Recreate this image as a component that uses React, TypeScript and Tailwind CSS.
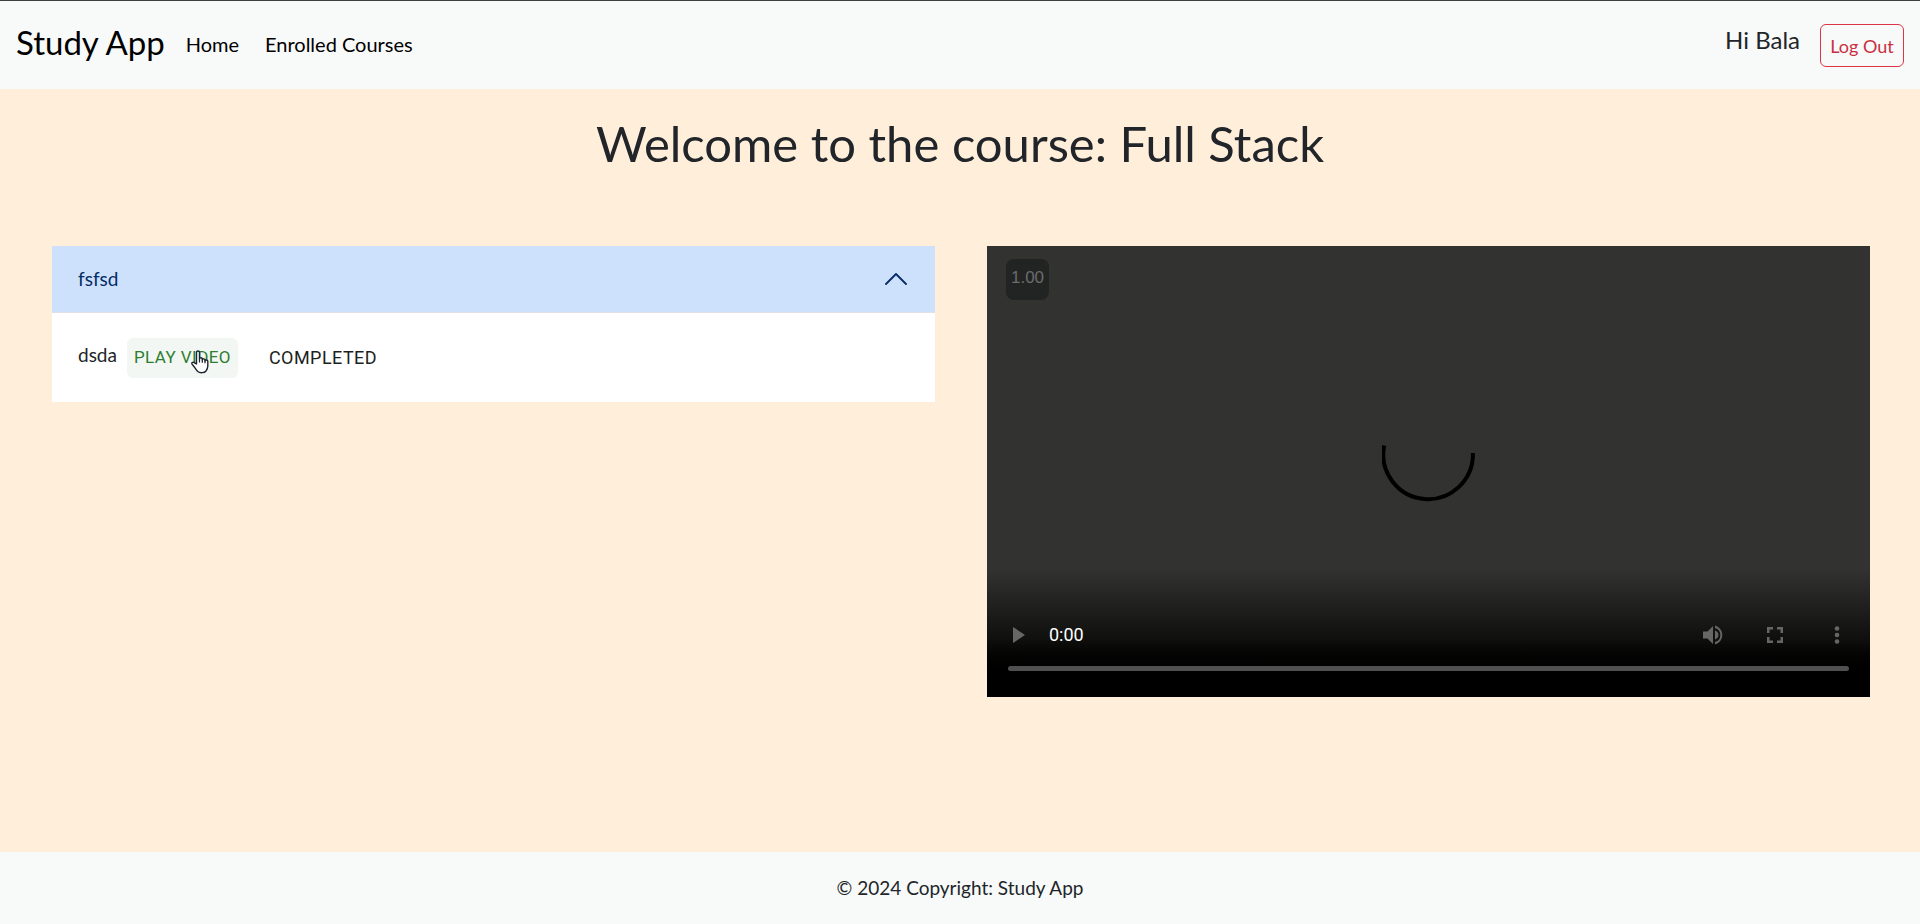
import { useState } from "react";

function ChevronUp() {
  return (
    <svg viewBox="0 0 22 12" className="h-3 w-[22px]" fill="none" stroke="#052c65" strokeWidth="1.8" strokeLinecap="round" strokeLinejoin="round" aria-hidden="true">
      <path d="M1 11 11 1l10 10" />
    </svg>
  );
}

function HandCursor() {
  return (
    <svg viewBox="0 0 18 24" className="pointer-events-none absolute top-3 left-16 h-6 w-[18px]" aria-hidden="true">
      <path
        d="M5.5 14V2.6c0-2.200 3-2.200 3 0V9c0-1.700 2.800-1.600 2.800 0v.9c0-1.500 2.700-1.400 2.700.1v1c0-1.400 2.800-1.300 2.800.3v4.800c0 2.600-1 4-2 5.100-1.300 1.600-5.800 2.200-8 .3C4.700 19.500 3.600 16.800 1.300 14.500c-1.500-1.700.6-3 2.200-1.700z"
        fill="#fff"
        stroke="#1c2430"
        strokeWidth="1.400"
        strokeLinejoin="round"
      />
      <path d="M8.500 8.500v4M11.300 9.500v3.300M14 10.500v2.700" stroke="#1c2430" strokeWidth="1.200" fill="none" />
    </svg>
  );
}

function NavBar() {
  return (
    <header className="flex h-[89px] items-start justify-between border-t border-[#3f3f3f] bg-[#f8faf9] px-4">
      <nav className="flex items-center pt-4 text-xl text-black">
        <a href="#" className="text-[33px] leading-[50px]">Study App</a>
        <a href="#home" className="ml-[21px] pt-[3px]">Home</a>
        <a href="#courses" className="ml-[26px] pt-[3px]">Enrolled Courses</a>
      </nav>
      <div className="flex items-start gap-5 pt-[23px]">
        <span className="text-2xl text-[#212529]">Hi Bala</span>
        <button type="button" className="h-[43px] w-[84px] rounded-md border border-[#dc3545] text-lg text-[#c92f42]">
          Log Out
        </button>
      </div>
    </header>
  );
}

function Lessons() {
  const [open, setOpen] = useState(true);
  return (
    <section>
      <h2>
        <button
          type="button"
          aria-expanded={open}
          onClick={() => setOpen(!open)}
          className="flex h-[67px] w-full items-center justify-between border-b border-[#dee2e6] bg-[#cde1fd] pr-7 pl-[26px] text-[19px] text-[#052c65]"
        >
          fsfsd
          <ChevronUp />
        </button>
      </h2>
      {open && (
        <div className="flex h-[89px] items-center bg-white pl-[26px] text-[19px] text-[#212529]">
          <span className="pb-1">dsda</span>
          <button type="button" className="relative ml-[10px] h-10 w-[111px] rounded-md bg-[#f2f7f3] font-[Roboto] text-[17px] tracking-wide text-[#2e7d32]">
            PLAY VIDEO
            <HandCursor />
          </button>
          <button type="button" className="ml-[23px] h-10 px-2 font-[Roboto] text-lg tracking-wide text-[#1d1f21]">
            COMPLETED
          </button>
        </div>
      )}
    </section>
  );
}

function Player() {
  return (
    <section aria-label="Course video" className="relative flex h-[451px] flex-col justify-between bg-[#323230]">
      <div className="absolute inset-x-0 bottom-0 h-32 bg-linear-to-b from-transparent via-[#0f0f0d] via-55% to-black to-90%" />
      <div className="relative mt-[13px] ml-[19px] flex h-[41px] w-[43px] items-center justify-center rounded-lg bg-[#222423] pb-1 font-['Liberation_Sans'] text-[17px] text-[#6c6c6a]">
        1.00
      </div>
      <svg viewBox="0 0 94 94" className="absolute top-[163px] left-1/2 size-[94px] -translate-x-1/2" fill="none" stroke="#000" strokeWidth="4" aria-hidden="true">
        <path d="M2.200 36.500A44.800 44.800 0 1 0 90.900 44" />
      </svg>
      <div className="relative px-[21px] pb-[26px]">
        <div className="flex h-9 items-center text-[#666]">
          <button type="button" aria-label="Play" className="size-6">
            <svg viewBox="0 0 24 24" fill="currentColor" className="size-6"><path d="M5 4v16l12-8z" /></svg>
          </button>
          <span className="ml-[17px] font-[Roboto] text-lg text-white">0:00</span>
          <div className="ml-auto flex items-center gap-[38px]">
            <button type="button" aria-label="Mute" className="size-6">
              <svg viewBox="0 0 24 24" fill="currentColor" className="size-6">
                <path d="M2 8.500v7h4.500L12 21V3L6.500 8.500H2zM17.500 12A5 5 0 0 0 14 7.500v9A5 5 0 0 0 17.500 12zM14 2.600v2.300a7.400 7.400 0 0 1 0 14.200v2.300a9.700 9.700 0 0 0 0-18.800z" />
              </svg>
            </button>
            <button type="button" aria-label="Full screen" className="size-6">
              <svg viewBox="0 0 24 24" fill="currentColor" className="size-6">
                <path d="M4 4h6v2.500H6.500V10H4zM14 4h6v6h-2.500V6.500H14zM4 14h2.500v3.500H10V20H4zM17.500 14H20v6h-6v-2.500h3.500z" />
              </svg>
            </button>
            <button type="button" aria-label="More options" className="size-6">
              <svg viewBox="0 0 24 24" fill="currentColor" className="size-6">
                <circle cx="12" cy="5.500" r="2.300" /><circle cx="12" cy="12" r="2.300" /><circle cx="12" cy="18.500" r="2.300" />
              </svg>
            </button>
          </div>
        </div>
        <div className="mt-[13px] h-[5px] rounded-full bg-[#505050]" />
      </div>
    </section>
  );
}

export default function App() {
  return (
    <div className="flex min-h-screen flex-col bg-[#ffeeda] font-[Lato,sans-serif]">
      <NavBar />
      <main className="grow">
        <h1 className="pt-6 text-center text-[49px] leading-[60px] text-[#212529]">Welcome to the course: Full Stack</h1>
        <div className="mt-[73px] grid grid-cols-2 items-start gap-[52px] pr-[50px] pl-[52px]">
          <Lessons />
          <Player />
        </div>
      </main>
      <footer className="flex h-[72px] items-center justify-center bg-[#f8faf9] text-[19px] text-[#212529]">
        © 2024 Copyright: Study App
      </footer>
    </div>
  );
}
